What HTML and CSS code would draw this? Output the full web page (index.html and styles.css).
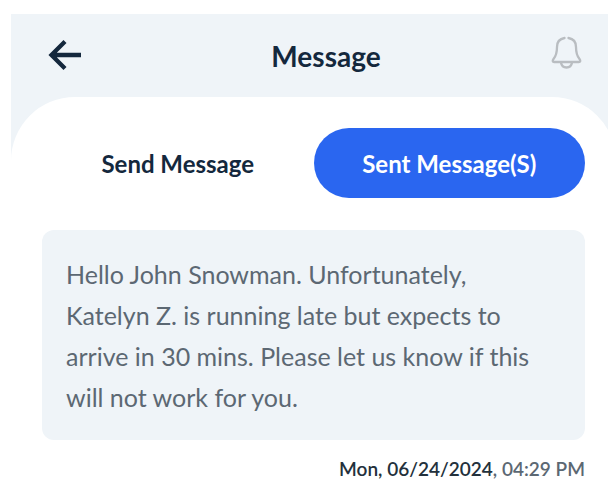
FILE: index.html
```html
<!DOCTYPE html>
<html lang="en">
<head>
<meta charset="utf-8">
<meta name="viewport" content="width=device-width, initial-scale=1">
<title>Message</title>
<link rel="stylesheet" href="styles.css">
</head>
<body>
<div class="app">
  <header class="header">
    <button class="icon-button back" type="button" aria-label="Back">
      <svg viewBox="0 0 34 34" width="34" height="34" fill="none" stroke="#14283d" stroke-width="4.300">
        <path d="M33 16H4M17 2.500 3.500 16 17 29.500"/>
      </svg>
    </button>
    <h1 class="title">Message</h1>
    <button class="icon-button" type="button" aria-label="Notifications">
      <svg viewBox="0 0 34 42" width="34" height="42" fill="none" stroke="#b9bdc1" stroke-width="2.300" stroke-linecap="round" stroke-linejoin="round">
        <path d="M14.500 3C9.500 3.800 7 7 7 12C7 18.500 6 21 3.500 24C2.200 25.800 2.600 27 4.200 27H28.800C30.400 27 30.800 25.800 29.500 24C27 21 26 18.500 26 12C26 7 23.500 3.800 18.500 3"/>
        <path d="M11 27.500C11.500 31 13.500 32.500 16.500 32.500S21.500 31 22 27.500"/>
      </svg>
    </button>
  </header>
  <main class="sheet">
    <nav class="tabs" aria-label="Messages">
      <button class="tab" type="button">Send Message</button>
      <button class="tab tab-active" type="button" aria-current="page">Sent Message(S)</button>
    </nav>
    <article class="message">
      <p class="bubble">Hello John Snowman. Unfortunately, Katelyn Z. is running late but expects to arrive in 30 mins. Please let us know if this will not work for you.</p>
      <p class="stamp"><span class="date">Mon, 06/24/2024</span>, 04:29 PM</p>
    </article>
  </main>
</div>
</body>
</html>
```
FILE: styles.css
```css
* {
  box-sizing: border-box;
}

body {
  margin: 0;
  overflow: hidden;
  background: #fff;
  color: #14283d;
  font-family: Lato, "Liberation Sans", sans-serif;
}

button {
  padding: 0;
  border: 0;
  background: none;
  color: inherit;
  font: inherit;
}

h1,
p {
  margin: 0;
}

.app {
  margin: 14px -8px 0 11px;
  background: #eff4f8;
}

.header {
  display: flex;
  align-items: center;
  justify-content: space-between;
  height: 83px;
  padding: 0 32px 0 37px;
}

.icon-button svg {
  display: block;
}

.back {
  width: 54px;
}

.title {
  font-size: 28px;
  font-weight: 700;
  line-height: 36px;
}

.sheet {
  padding: 31px 31px 12px;
  border-radius: 64px 64px 0 0;
  background: #fff;
}

.tabs {
  display: grid;
  grid-template-columns: 1fr 1fr;
}

.tab {
  height: 70px;
  border-radius: 35px;
  font-size: 24px;
  font-weight: 700;
}

.tab-active {
  background: #2a66f0;
  color: #fff;
}

.message {
  margin-top: 32px;
}

.bubble {
  padding: 24px 48px 22px 24px;
  border-radius: 12px;
  background: #eff4f8;
  color: #5c6873;
  font-size: 25px;
  line-height: 41px;
}

.stamp {
  margin-top: 16px;
  color: #5c6873;
  font-size: 19px;
  font-weight: 600;
  line-height: 26px;
  text-align: right;
}

.date {
  color: #23313c;
}
```
